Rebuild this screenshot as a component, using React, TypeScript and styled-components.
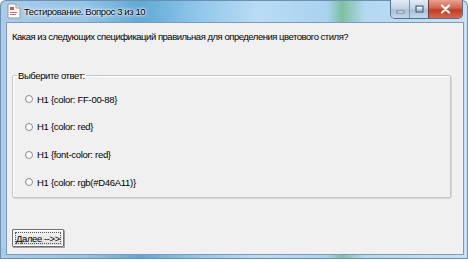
import React from "react";
import styled, { createGlobalStyle } from "styled-components";

const GlobalStyle = createGlobalStyle`
  html, body {
    margin: 0;
    padding: 0;
    background: #ffffff;
  }
  body {
    font-family: "Liberation Sans", Arial, sans-serif;
  }
`;

const answers = [
  "H1 {color: FF-00-88}",
  "H1 {color: red}",
  "H1 {font-color: red}",
  "H1 {color: rgb(#D46A11)}",
];

const Window = styled.div`
  width: 468px;
  height: 259px;
  display: flex;
  flex-direction: column;
  padding: 0 4px 4px 6px;
  box-sizing: border-box;
  border-radius: 6px 6px 0 0;
  background: linear-gradient(
    90deg,
    #a8cdea 0%,
    #93c4e6 18%,
    #5fa9d6 30%,
    #8fc6ea 42%,
    #b9dcf4 55%,
    #a8d3f0 70%,
    #7fc0a0 73%,
    #b4d8f2 78%,
    #c6e1f5 100%
  );
  box-shadow: inset 0 0 0 1px #6f8fb0;
`;

const TitleBar = styled.div`
  height: 22px;
  display: flex;
  align-items: center;
  gap: 3px;
  padding-left: 1px;
  position: relative;
`;

const TitleText = styled.span`
  font-size: 9.5px;
  letter-spacing: -0.4px;
  color: #000;
  text-shadow: 0 0 6px #ffffff, 0 0 3px #ffffff, 0 0 2px #ffffff;
`;

const Controls = styled.div`
  position: absolute;
  top: 0;
  right: 1px;
  display: flex;
  height: 18px;
  border: 1px solid #54708e;
  border-top: none;
  border-radius: 0 0 5px 5px;
  overflow: hidden;
`;

const CtrlButton = styled.div<{ $close?: boolean }>`
  width: ${({ $close }) => ($close ? "33px" : "18px")};
  display: flex;
  align-items: center;
  justify-content: center;
  border-left: ${({ $close }) => ($close ? "1px solid #7a3a30" : "1px solid #7d93ab")};
  background: ${({ $close }) =>
    $close
      ? "linear-gradient(#e8a393 0%, #d4624c 45%, #c23c24 55%, #d6664a 100%)"
      : "linear-gradient(#e2ecf5 0%, #c3d5e6 45%, #a8c0d8 55%, #c4d8ea 100%)"};
  &:first-child {
    border-left: none;
  }
`;

const Client = styled.div`
  flex: 1;
  background: #f0f0f0;
  border: 1px solid #8399b1;
  display: flex;
  flex-direction: column;
  padding: 8px 0 6px 5px;
`;

const Question = styled.div`
  font-size: 9.5px;
  color: #000;
  letter-spacing: -0.48px;
  height: 35px;
`;

const Group = styled.fieldset`
  margin: 4px 12px 0 0;
  padding: 11px 0 8px 12px;
  border: 1px solid #c6c6c6;
  box-shadow: 1px 1px 0 #ffffff inset, 1px 1px 0 #d6d6d6;
  border-radius: 2px;
  display: flex;
  flex-direction: column;
  gap: 13.8px;
`;

const Legend = styled.legend`
  font-size: 9.5px;
  letter-spacing: -0.4px;
  color: #000;
  padding: 0 1px;
  margin-left: -8px;
`;

const Option = styled.label`
  display: flex;
  align-items: center;
  gap: 4px;
  font-size: 9.5px;
  color: #000;
  height: 14px;
  letter-spacing: -0.3px;
`;

const Radio = styled.span`
  width: 8px;
  height: 8px;
  border-radius: 50%;
  border: 1px solid #8e8f8f;
  background: radial-gradient(circle at 60% 60%, #ffffff 40%, #e6e6e6 100%);
  box-sizing: border-box;
`;

const Footer = styled.div`
  margin-top: auto;
  margin-bottom: 1px;
`;

const NextButton = styled.button`
  font-family: "Liberation Sans", Arial, sans-serif;
  font-size: 9.5px;
  letter-spacing: -0.4px;
  color: #000;
  width: 52px;
  height: 18px;
  padding: 0 3px;
  text-align: left;
  background: linear-gradient(#f6f6f6, #dcdcdc);
  border: 1px solid #707070;
  box-shadow: inset 0 0 0 1px #ffffff, 1px 1px 0 #a0a0a0;
  border-radius: 1px;
  outline: 1px dotted #555;
  outline-offset: -4px;
`;

const AppIcon = () => (
  <svg width="14" height="16" viewBox="0 0 14 16">
    <path d="M1 1h8l4 4v10H1z" fill="#ffffff" stroke="#9a9a9a" />
    <path d="M9 1v4h4" fill="#e8e8e8" stroke="#9a9a9a" />
    <rect x="3" y="4" width="4" height="3" fill="#d9534f" />
    <rect x="3" y="9" width="7" height="1" fill="#d07070" />
    <rect x="3" y="11" width="6" height="1" fill="#d07070" />
  </svg>
);

export default function App() {
  return (
    <>
      <GlobalStyle />
      <Window>
        <TitleBar>
          <AppIcon />
          <TitleText>Тестирование. Вопрос 3 из 10</TitleText>
          <Controls>
            <CtrlButton>
              <svg width="9" height="9" viewBox="0 0 9 9">
                <rect x="1" y="6" width="7" height="2" fill="#fff" stroke="#3a4f66" strokeWidth="0.6" />
              </svg>
            </CtrlButton>
            <CtrlButton>
              <svg width="9" height="9" viewBox="0 0 9 9">
                <rect x="1" y="1" width="7" height="6" fill="none" stroke="#3a4f66" strokeWidth="1" />
                <rect x="2" y="2" width="5" height="1.5" fill="#fff" />
              </svg>
            </CtrlButton>
            <CtrlButton $close>
              <svg width="11" height="10" viewBox="0 0 11 10">
                <path d="M2 1.5l7 7M9 1.5l-7 7" stroke="#fff" strokeWidth="2.2" strokeLinecap="round" />
              </svg>
            </CtrlButton>
          </Controls>
        </TitleBar>
        <Client>
          <Question>
            Какая из следующих спецификаций правильная для определения цветового стиля?
          </Question>
          <Group>
            <Legend>Выберите ответ:</Legend>
            {answers.map((a) => (
              <Option key={a}>
                <Radio />
                {a}
              </Option>
            ))}
          </Group>
          <Footer>
            <NextButton>Далее --&gt;&gt;</NextButton>
          </Footer>
        </Client>
      </Window>
    </>
  );
}
